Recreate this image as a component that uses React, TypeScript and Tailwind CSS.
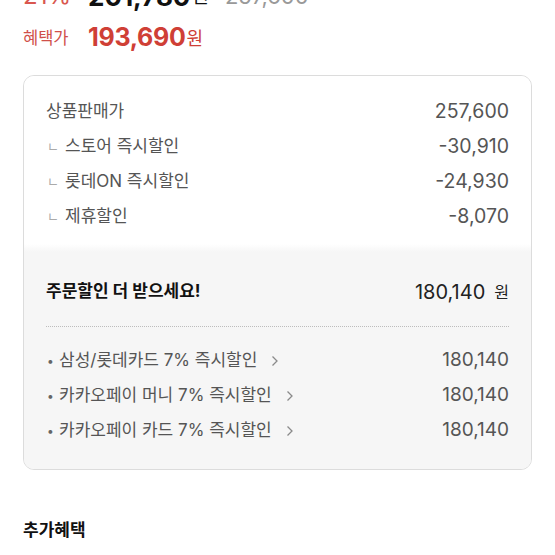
const font = { fontFamily: '"Inter", "Noto Sans CJK KR", sans-serif' };

function Chevron() {
  return (
    <svg width="8" height="12" viewBox="0 0 8 12" className="ml-[14px] shrink-0">
      <polyline points="1.5,1.5 6,6 1.5,10.5" fill="none" stroke="#8a8a8a" strokeWidth="1.3" />
    </svg>
  );
}

const priceRows = [
  { label: '스토어 즉시할인', value: '-30,910' },
  { label: '롯데ON 즉시할인', value: '-24,930' },
  { label: '제휴할인', value: '-8,070' },
];

const cardRows = [
  { label: '삼성/롯데카드 7% 즉시할인', value: '180,140' },
  { label: '카카오페이 머니 7% 즉시할인', value: '180,140' },
  { label: '카카오페이 카드 7% 즉시할인', value: '180,140' },
];

export default function App() {
  return (
    <div className="w-[555px] h-[555px] overflow-hidden bg-white px-[23px]" style={font}>
      {/* price header, first row is cut off */}
      <div className="-mt-[22px]">
        <div className="h-[40px] pb-[4px] flex items-center">
          <span className="w-[65px] text-[24px] text-[#d9574f]">21%</span>
          <span className="text-[26px] font-bold text-[#111]">201,780</span>
          <span className="text-[18px] text-[#111] ml-[2px]">원</span>
          <span className="text-[22px] text-[#999] line-through ml-[16px]">257,600</span>
        </div>
        <div className="h-[40px] flex items-center">
          <span className="w-[65px] text-[16.5px] text-[#d0504a]">혜택가</span>
          <span className="text-[25px] font-bold text-[#cf3f36] tracking-[-0.3px]">193,690</span>
          <span className="text-[18px] text-[#cf3f36] ml-[1px] mt-[1px]">원</span>
        </div>
      </div>

      <div className="mt-[17px] border border-[#dcdcdc] rounded-[11px] overflow-hidden">
        <div className="bg-white px-[22px] pt-[18px] pb-[10px] text-[17px] text-[#555]">
          <div className="h-[35px] flex items-center justify-between">
            <span>상품판매가</span>
            <span className="text-[19.5px]">257,600</span>
          </div>
          {priceRows.map((r) => (
            <div key={r.label} className="h-[35px] flex items-center justify-between">
              <span className="flex items-center">
                <span className="text-[13px] text-[#aaaaaa] w-[19px] pl-[1px]">ㄴ</span>
                <span>{r.label}</span>
              </span>
              <span className="text-[19.5px]">{r.value}</span>
            </div>
          ))}
        </div>

        <div className="bg-gradient-to-b from-white to-[#f6f6f6] h-[8px]" />
        <div className="bg-[#f6f6f6] px-[22px] pt-[22px] pb-[21px]">
          <div className="h-[35px] flex items-center justify-between">
            <span className="text-[17px] font-bold text-[#111]">주문할인 더 받으세요!</span>
            <span className="flex items-center text-[#222]">
              <span className="text-[20px]">180,140</span>
              <span className="text-[16px] ml-[9px]">원</span>
            </span>
          </div>
          <div className="mt-[17px] mb-[16px] border-t border-dotted border-[#bdbdbd]" />
          {cardRows.map((r) => (
            <div key={r.label} className="h-[35px] flex items-center justify-between text-[17px] text-[#555]">
              <span className="flex items-center">
                <span className="w-[13px] pl-[1px] text-[12px] text-[#666]">•</span>
                <span>{r.label}</span>
                <Chevron />
              </span>
              <span className="text-[19px]">{r.value}</span>
            </div>
          ))}
        </div>
      </div>

      <div className="mt-[48px] text-[17px] font-bold text-[#111]">추가혜택</div>
    </div>
  );
}
